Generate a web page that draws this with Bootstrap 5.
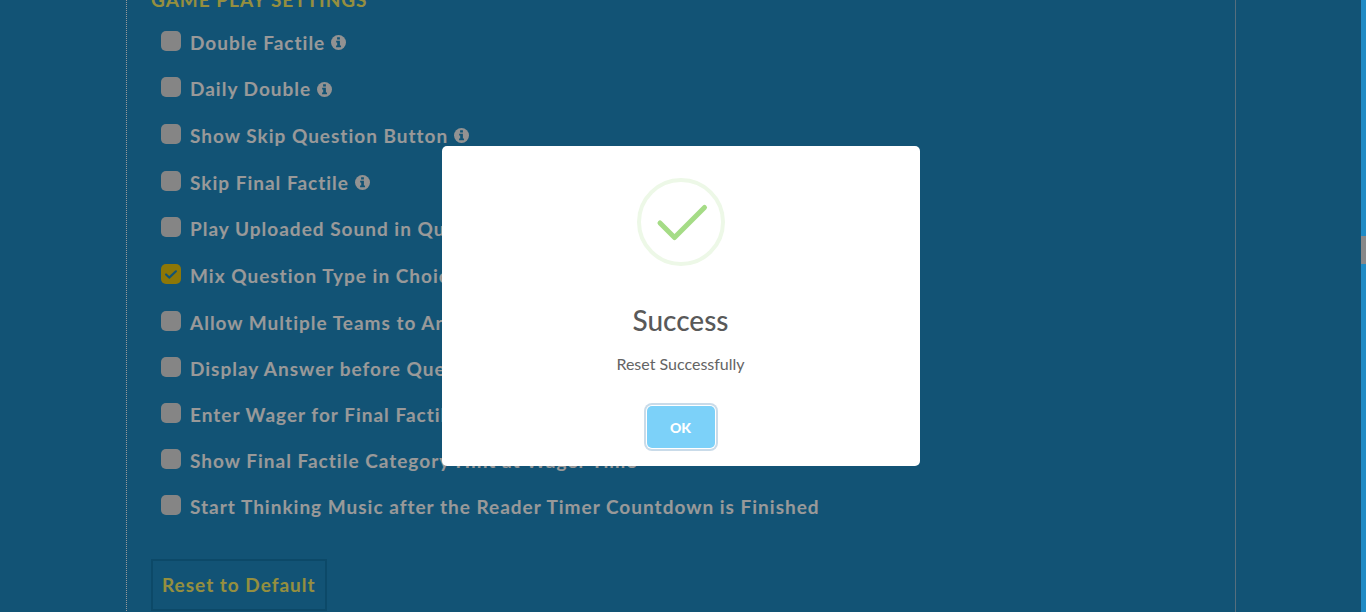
<!DOCTYPE html>
<html lang="en">
<head>
<meta charset="utf-8">
<meta name="viewport" content="width=device-width, initial-scale=1">
<title>Game Play Settings</title>
<link href="https://cdn.jsdelivr.net/npm/bootstrap@5.3.0/dist/css/bootstrap.min.css" rel="stylesheet">
<style>
  html { height: 100%; }
  body { height: 100%; overflow: hidden; background: #1f8bc3; color: #fff; font-family: Lato, "Open Sans", sans-serif; }
  .page-view { height: 100%; margin-right: 5px; overflow: hidden; }
  .settings-panel { margin: -24px 125px 0 126px; padding: 12px 24px; border-left: 1px dotted #fff; border-right: 1px solid #8fb8d0; }
  .settings-title { font-size: 19px; line-height: 24px; font-weight: 700; letter-spacing: 1px; color: #f8ee69; margin: 0 0 7px; }
  .setting { height: 46px; padding-left: 10px; font-size: 19px; font-weight: 700; letter-spacing: 1px; line-height: 24px; white-space: nowrap; }
  .setting.tall { height: 47px; }
  .setting .form-check-input { width: 20px; height: 20px; margin: 0 9px 4px 0; border: 0; border-radius: 5px; background-color: #dedede; flex: none; }
  .setting .form-check-input:checked { background-color: #ecc60c; background-size: 18px; background-image: url("data:image/svg+xml,%3csvg xmlns='http://www.w3.org/2000/svg' viewBox='0 0 20 20'%3e%3cpath fill='none' stroke='%231f8bc3' stroke-linecap='round' stroke-linejoin='round' stroke-width='2.4' d='M4.500 10.500l3.500 3.500L15.500 7'/%3e%3c/svg%3e"); }
  .info-icon { width: 15px; height: 15px; margin-left: 6px; }
  .btn-reset { margin-top: 29px; height: 52px; padding: 0 9px; border: 2px solid #147aad; border-radius: 0; color: #f8ee69; font-size: 19px; font-weight: 700; letter-spacing: 1px; }
  .shade { right: 5px; bottom: 0; background: rgba(0, 0, 0, .4); }
  .alert-box { width: 478px; max-width: 100%; border-radius: 5px; padding: 32px 20px 16px; color: #595959; }
  .alert-title { font-size: 28px; line-height: 34px; font-weight: 500; margin: 37px 0 0; }
  .alert-copy { font-size: 16px; line-height: 24px; margin: 15px 0 0; color: #646464; }
  .btn-ok { width: 68px; height: 42px; margin: 30px 0 2px; border: 0; border-radius: 5px; background: #7cd1f9; color: #fff; font-size: 14px; font-weight: 900; box-shadow: 0 0 0 1px #fff, 0 0 0 3px #c9dbe9; }
  .scroll-track { top: 0; right: 0; width: 5px; height: 100%; background: #1f8bc5; }
  .scroll-thumb { height: 28px; margin-top: 236px; background: #888; }
</style>
</head>
<body>
<svg class="d-none" aria-hidden="true">
  <symbol id="info" viewBox="0 0 16 16">
    <circle cx="8" cy="8" r="8" fill="#f4f4f4"/>
    <path fill="#1f8bc3" d="M6.500 2.500h3v2.400h-3zM5.500 6.200h4v5h1.200v1.900H5.400v-1.900h1.200V8.100H5.500z"/>
  </symbol>
</svg>
<main class="page-view">
  <section class="settings-panel">
    <h2 class="settings-title">GAME PLAY SETTINGS</h2>
    <div class="setting tall d-flex align-items-center"><input class="form-check-input" type="checkbox" id="s1"><label for="s1">Double Factile</label><svg class="info-icon"><use href="#info"/></svg></div>
    <div class="setting d-flex align-items-center"><input class="form-check-input" type="checkbox" id="s2"><label for="s2">Daily Double</label><svg class="info-icon"><use href="#info"/></svg></div>
    <div class="setting tall d-flex align-items-center"><input class="form-check-input" type="checkbox" id="s3"><label for="s3">Show Skip Question Button</label><svg class="info-icon"><use href="#info"/></svg></div>
    <div class="setting tall d-flex align-items-center"><input class="form-check-input" type="checkbox" id="s4"><label for="s4">Skip Final Factile</label><svg class="info-icon"><use href="#info"/></svg></div>
    <div class="setting d-flex align-items-center"><input class="form-check-input" type="checkbox" id="s5"><label for="s5">Play Uploaded Sound in Question</label></div>
    <div class="setting tall d-flex align-items-center"><input class="form-check-input" type="checkbox" id="s6" checked><label for="s6">Mix Question Type in Choice Mode</label></div>
    <div class="setting tall d-flex align-items-center"><input class="form-check-input" type="checkbox" id="s7"><label for="s7">Allow Multiple Teams to Answer</label></div>
    <div class="setting d-flex align-items-center"><input class="form-check-input" type="checkbox" id="s8"><label for="s8">Display Answer before Question</label></div>
    <div class="setting d-flex align-items-center"><input class="form-check-input" type="checkbox" id="s9"><label for="s9">Enter Wager for Final Factile</label></div>
    <div class="setting d-flex align-items-center"><input class="form-check-input" type="checkbox" id="s10"><label for="s10">Show Final Factile Category Hint at Wager Time</label></div>
    <div class="setting d-flex align-items-center"><input class="form-check-input" type="checkbox" id="s11"><label for="s11">Start Thinking Music after the Reader Timer Countdown is Finished</label></div>
    <button class="btn btn-reset" type="button">Reset to Default</button>
  </section>
</main>
<div class="shade position-fixed top-0 start-0 z-3 d-flex align-items-center justify-content-center">
  <div class="alert-box bg-white text-center d-flex flex-column align-items-center" role="dialog" aria-modal="true" aria-labelledby="alertTitle">
    <svg width="88" height="88" viewBox="0 0 88 88" aria-hidden="true">
      <circle cx="44" cy="44" r="42" fill="none" stroke="#edf8e7" stroke-width="4"/>
      <path d="M23 45l14.500 14.500L67.500 29.500" fill="none" stroke="#a5dc86" stroke-width="5" stroke-linecap="round" stroke-linejoin="round"/>
    </svg>
    <h1 class="alert-title" id="alertTitle">Success</h1>
    <p class="alert-copy">Reset Successfully</p>
    <button class="btn btn-ok" type="button">OK</button>
  </div>
</div>
<div class="scroll-track position-fixed"><div class="scroll-thumb"></div></div>
<script src="https://cdn.jsdelivr.net/npm/bootstrap@5.3.0/dist/js/bootstrap.bundle.min.js"></script>
</body>
</html>
